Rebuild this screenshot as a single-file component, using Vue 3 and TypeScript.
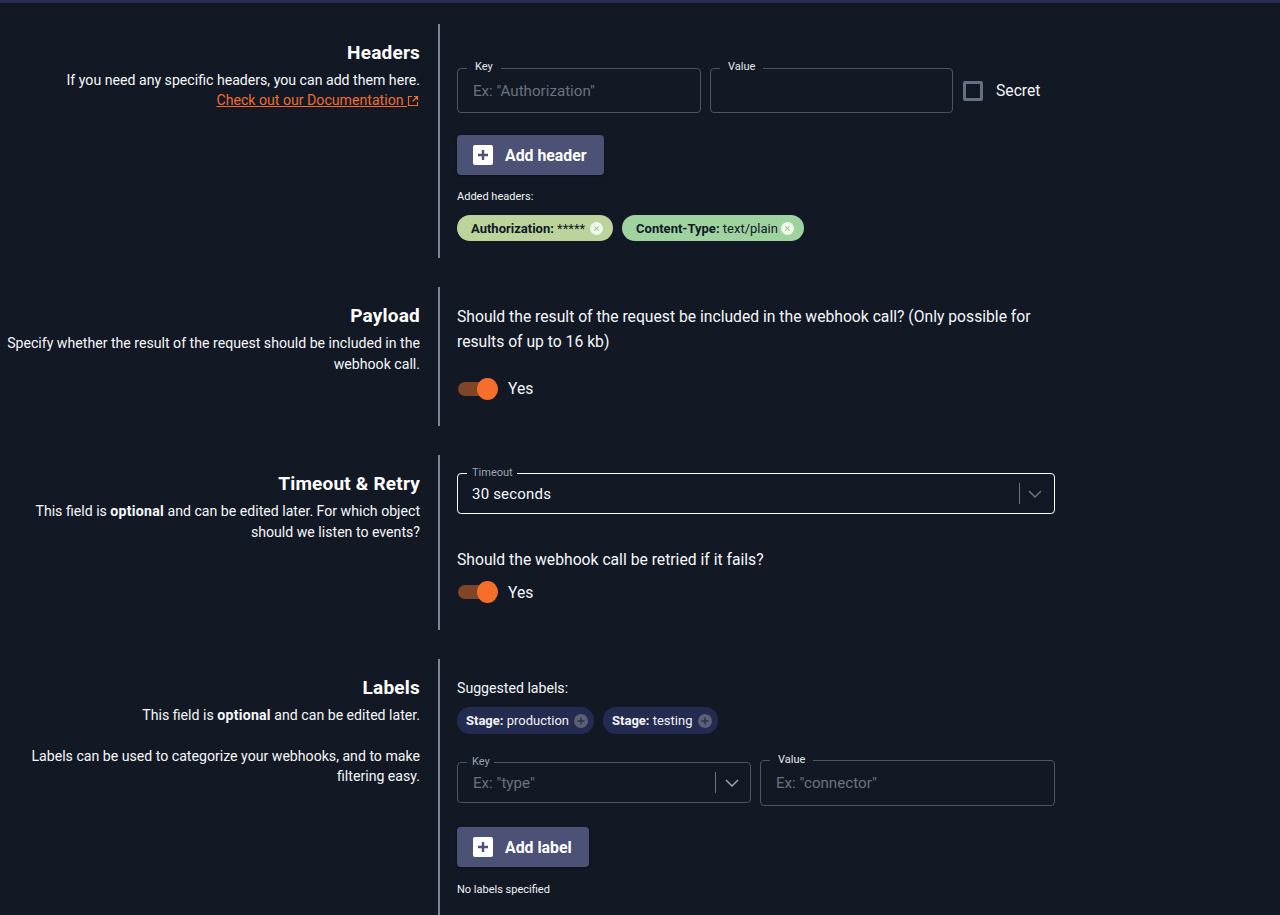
<script setup lang="ts">
const headers = [
  { key: 'Authorization:', value: '*****', cls: 'lime' },
  { key: 'Content-Type:', value: 'text/plain', cls: 'green' },
]
const suggested = [
  { key: 'Stage:', value: 'production' },
  { key: 'Stage:', value: 'testing' },
]
</script>

<template>
  <div class="page">
    <section class="row headers-row">
      <div class="side">
        <h2>Headers</h2>
        <p class="tight">If you need any specific headers, you can add them here.</p>
        <a class="doc" href="#">Check out our Documentation <svg class="ext" viewBox="0 0 12 12" width="12" height="12"><path d="M5 1.5H1.5v9h9V7M7 1.5h3.5V5M10.5 1.5 5.5 6.5" fill="none" stroke="currentColor" stroke-width="1.2" /></svg></a>
      </div>
      <div class="main">
        <div class="fields first-fields">
          <div class="field f-key">
            <span class="float wide">Key</span>
            <span class="ph">Ex: "Authorization"</span>
          </div>
          <div class="field f-val">
            <span class="float wide">Value</span>
          </div>
          <label class="check"><span class="box"></span><span>Secret</span></label>
        </div>
        <button class="btn" type="button">
          <svg viewBox="0 0 20 20" width="20" height="20"><rect width="20" height="20" rx="2" fill="#fff" /><path d="M10 5v10M5 10h10" stroke="#4b5275" stroke-width="2.4" /></svg>
          Add header
        </button>
        <div class="small">Added headers:</div>
        <div class="chips">
          <span v-for="h in headers" :key="h.key" class="chip" :class="h.cls">
            <b>{{ h.key }}</b>&nbsp;{{ h.value }}
            <svg viewBox="0 0 13 13" width="13" height="13"><circle cx="6.5" cy="6.5" r="6.5" fill="#f2f7ec" /><path d="M4.3 4.3l4.4 4.4M8.7 4.3l-4.4 4.4" stroke="#a8cb9f" stroke-width="1.2" /></svg>
          </span>
        </div>
      </div>
    </section>

    <section class="row payload-row">
      <div class="side">
        <h2>Payload</h2>
        <p>Specify whether the result of the request should be included in the webhook call.</p>
      </div>
      <div class="main">
        <p class="q">Should the result of the request be included in the webhook call? (Only possible for results of up to 16 kb)</p>
        <div class="toggle-line first-toggle"><span class="toggle"><i></i></span>Yes</div>
      </div>
    </section>

    <section class="row timeout-row">
      <div class="side">
        <h2>Timeout &amp; Retry</h2>
        <p>This field is <b>optional</b> and can be edited later. For which object should we listen to events?</p>
      </div>
      <div class="main">
        <div class="field select focus">
          <span class="float muted">Timeout</span>
          <span class="val">30 seconds</span>
          <span class="sep"></span>
          <svg class="chev" viewBox="0 0 14 8" width="14" height="8"><path d="M1 1l6 6 6-6" fill="none" stroke="#6b7280" stroke-width="1.5" /></svg>
        </div>
        <p class="q retry">Should the webhook call be retried if it fails?</p>
        <div class="toggle-line"><span class="toggle"><i></i></span>Yes</div>
      </div>
    </section>

    <section class="row labels-row">
      <div class="side">
        <h2>Labels</h2>
        <p>This field is <b>optional</b> and can be edited later.</p>
        <p class="spaced">Labels can be used to categorize your webhooks, and to make filtering easy.</p>
      </div>
      <div class="main">
        <div class="suggest">Suggested labels:</div>
        <div class="chips sugg">
          <span v-for="s in suggested" :key="s.value" class="chip navy">
            <b>{{ s.key }}</b>&nbsp;{{ s.value }}
            <svg viewBox="0 0 14 14" width="14" height="14"><circle cx="7" cy="7" r="7" fill="#5b6175" /><path d="M7 3.5v7M3.5 7h7" stroke="#2a3050" stroke-width="1.3" /></svg>
          </span>
        </div>
        <div class="fields label-fields">
          <div class="field select l-key">
            <span class="float muted">Key</span>
            <span class="ph">Ex: "type"</span>
            <span class="sep"></span>
            <svg class="chev light" viewBox="0 0 14 8" width="14" height="8"><path d="M1 1l6 6 6-6" fill="none" stroke="#9ca3af" stroke-width="1.5" /></svg>
          </div>
          <div class="field l-val">
            <span class="float wide">Value</span>
            <span class="ph">Ex: "connector"</span>
          </div>
        </div>
        <button class="btn label-btn" type="button">
          <svg viewBox="0 0 20 20" width="20" height="20"><rect width="20" height="20" rx="2" fill="#fff" /><path d="M10 5v10M5 10h10" stroke="#4b5275" stroke-width="2.4" /></svg>
          Add label
        </button>
        <div class="small none">No labels specified</div>
      </div>
    </section>
  </div>
</template>

<style>
html, body { margin: 0; background: #121925; overflow: hidden; }
</style>

<style scoped>
.page {
  box-sizing: border-box;
  height: 915px;
  overflow: hidden;
  background: #121925;
  border-top: 3px solid #272d52;
  padding-top: 21px;
  font-family: Roboto, "Liberation Sans", sans-serif;
  color: #f6f7f9;
  font-size: 14.14px;
  line-height: 21px;
  display: flex;
  flex-direction: column;
  gap: 29px;
}
.row { display: grid; grid-template-columns: 438px 617px; flex: none; }
.headers-row { height: 234px; }
.payload-row { height: 139px; }
.timeout-row { height: 175px; }
.labels-row { height: 300px; }
.side {
  box-sizing: border-box;
  padding: 17px 18px 0 0;
  text-align: right;
}
.side h2 { margin: 0 0 5px; font-size: 19px; line-height: 24px; font-weight: 700; color: #fff; letter-spacing: 0.2px; }
.side p { margin: 0; }
.side p b { letter-spacing: 0.25px; }
.side p.spaced { margin-top: 20px; line-height: 20px; }
.side p.tight { line-height: 20px; }
.doc { color: #f26a2e; text-decoration: underline; display: block; line-height: 20px; margin-right: 1px; }
.ext { vertical-align: -2px; }
.main {
  box-sizing: border-box;
  border-left: 2px solid #7d8599;
  padding-left: 17px;
  min-width: 0;
}
.fields { display: flex; gap: 9px; }
.first-fields { padding-top: 44px; align-items: center; }
.field {
  box-sizing: border-box;
  position: relative;
  border: 1px solid #4b5563;
  border-radius: 4px;
  display: flex;
  align-items: center;
  padding: 1px 14px 0 15px;
}
.l-val { padding-top: 0; }
.f-key { width: 244px; height: 45px; }
.f-val { width: 243px; height: 45px; }
.float {
  position: absolute;
  top: -9px;
  left: 9px;
  font-size: 11px;
  line-height: 14px;
  background: #121925;
  padding: 0 5px;
  color: #e5e7eb;
}
.float.wide { padding: 0 8px; }
.float.muted { top: -8px; color: #9ca3af; padding: 0 4px 0 5px; }
.l-val .float { top: -8px; }
.ph { color: #6b7280; font-size: 15.15px; }
.check { display: flex; align-items: center; gap: 13px; margin-left: 1px; font-size: 15.7px; }
.box { box-sizing: border-box; width: 20px; height: 20px; border: 3px solid #667085; border-radius: 2px; }
.btn {
  display: flex;
  align-items: center;
  gap: 12px;
  margin-top: 22px;
  height: 40px;
  padding: 0 17px 0 16px;
  background: #4b5275;
  border: 0;
  border-radius: 4px;
  color: #fff;
  font: 700 15.85px Roboto, sans-serif;
  box-shadow: 0 1px 3px rgba(0, 0, 0, 0.4);
}
.label-btn { margin-top: 21px; }
.small { font-size: 11px; line-height: 14px; margin-top: 15px; color: #f3f4f6; }
.chips { display: flex; gap: 9px; margin-top: 11px; }
.chip {
  display: inline-flex;
  align-items: center;
  height: 26px;
  box-sizing: border-box;
  padding: 0 10px 0 14px;
  border-radius: 13px;
  font-size: 13px;
  color: #111827;
}
.chip b { font-weight: 700; }
.chip svg { margin-left: 5px; }
.lime { background: #bcd39c; }
.green { background: #9ed3a0; }
.green svg { margin-left: 3px; }
.navy { background: #232b50; color: #f3f4f6; padding: 0 6px 0 9px; height: 27px; }
.navy:last-child svg { margin-left: 6px; }
.q { margin: 0; font-size: 15.7px; line-height: 25px; }
.payload-row .main { padding-top: 17px; }
.toggle-line { display: flex; align-items: center; gap: 10px; font-size: 15.7px; height: 24px; }
.first-toggle { margin-top: 22px; }
.first-toggle .toggle { margin-top: 2px; }
.toggle { position: relative; width: 40px; height: 14px; border-radius: 7px; background: #7f4527; margin-left: 1px; margin-right: 0; }
.toggle i { position: absolute; right: 0; top: -4px; width: 21px; height: 22px; border-radius: 50%; background: #f56e2b; }
.timeout-row .main { padding-top: 18px; }
.select { width: 598px; height: 41px; }
.focus { border-color: #fff; }
.val { font-size: 15px; letter-spacing: 0.2px; margin-left: -1px; }
.sep { position: absolute; right: 34px; top: 9px; height: 21px; width: 1px; background: #6b7280; }
.chev { position: absolute; right: 12px; top: 16px; }
.chev.light { right: 11px; }
.retry { margin-top: 33px; }
.timeout-row .toggle-line { margin-top: 8px; }
.labels-row .main { padding-top: 18px; }
.suggest { font-size: 14.14px; line-height: 22px; }
.sugg { margin-top: 8px; }
.label-fields { margin-top: 26px; align-items: flex-start; }
.l-key { width: 294px; height: 41px; margin-top: 2px; }
.l-val { width: 295px; height: 46px; }
.none { margin-top: 16px; }
</style>
